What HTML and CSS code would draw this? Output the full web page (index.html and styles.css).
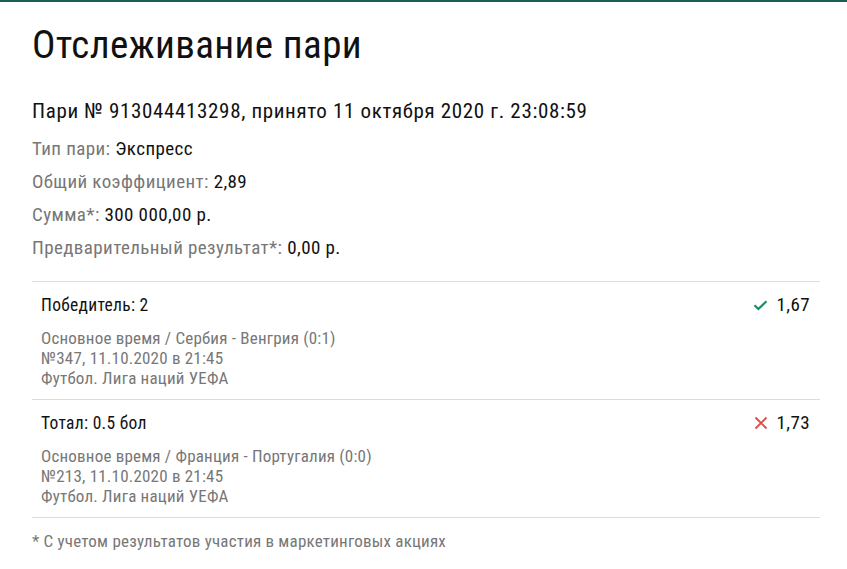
FILE: index.html
```html
<!DOCTYPE html>
<html lang="ru">
<head>
  <meta charset="UTF-8">
  <title>Отслеживание пари</title>
  <meta name="viewport" content="width=device-width, initial-scale=1.0">
  <link rel="stylesheet" href="styles.css">
</head>
<body>
  <div class="page">
    <h1 class="title">Отслеживание пари</h1>
    <h2 class="bet-head">Пари № 913044413298, принято 11 октября 2020 г. 23:08:59</h2>

    <ul class="summary">
      <li><span class="label">Тип пари:</span> Экспресс</li>
      <li><span class="label">Общий коэффициент:</span> 2,89</li>
      <li><span class="label">Сумма*:</span> 300 000,00 р.</li>
      <li><span class="label">Предварительный результат*:</span> 0,00 р.</li>
    </ul>

    <div class="events">
      <div class="event">
        <div class="event-top">
          <div class="event-name">Победитель: 2</div>
          <div class="event-odd">
            <svg class="mark win" width="15" height="14" viewBox="0 0 15 14"><path d="M1.5 7.3 L5.4 11 L13.5 3.2" fill="none" stroke="currentColor" stroke-width="2.2"/></svg>
            1,67
          </div>
        </div>
        <div class="event-info">
          <div>Основное время / Сербия - Венгрия (0:1)</div>
          <div>№347, 11.10.2020 в 21:45</div>
          <div>Футбол. Лига наций УЕФА</div>
        </div>
      </div>

      <div class="event">
        <div class="event-top">
          <div class="event-name">Тотал: 0.5 бол</div>
          <div class="event-odd">
            <svg class="mark lose" width="14" height="14" viewBox="0 0 14 14"><path d="M1.5 1.5 L12.5 12.5 M12.5 1.5 L1.5 12.5" fill="none" stroke="currentColor" stroke-width="1.9"/></svg>
            1,73
          </div>
        </div>
        <div class="event-info">
          <div>Основное время / Франция - Португалия (0:0)</div>
          <div>№213, 11.10.2020 в 21:45</div>
          <div>Футбол. Лига наций УЕФА</div>
        </div>
      </div>
    </div>

    <p class="note">* С учетом результатов участия в маркетинговых акциях</p>
  </div>
</body>
</html>
```

FILE: styles.css
```css
* {
  box-sizing: border-box;
  margin: 0;
  padding: 0;
}

body {
  background-color: #fff;
  border-top: 2px solid #1e5b53;
  font-family: "Roboto", "Liberation Sans", sans-serif;
  font-stretch: condensed;
  color: #111;
}

.page {
  padding: 19px 27px 0 32px;
}

.title {
  font-size: 39px;
  font-weight: 400;
  line-height: 48px;
  letter-spacing: 0.4px;
}

.bet-head {
  margin-top: 29px;
  font-size: 21px;
  font-weight: 400;
  line-height: 26px;
  letter-spacing: 0.65px;
}

.summary {
  list-style: none;
  margin-top: 8px;
  font-size: 19px;
  letter-spacing: 0.4px;
}

.summary li {
  line-height: 33px;
}

.label {
  color: #777;
}

.events {
  margin-top: 17px;
  border-top: 1px solid #dcdcdc;
}

.event {
  padding: 12px 10px 11px 9px;
  border-bottom: 1px solid #dcdcdc;
}

.event-top {
  display: flex;
  justify-content: space-between;
  align-items: center;
  font-size: 17.5px;
  line-height: 22px;
  letter-spacing: 0.3px;
}

.event-odd {
  display: flex;
  align-items: center;
  gap: 9px;
  font-size: 19px;
  letter-spacing: 0.4px;
}

.mark.win {
  color: #1c8c6c;
}

.mark.lose {
  color: #e04a4a;
}

.event-info {
  margin-top: 12px;
  color: #777;
  font-size: 17px;
  line-height: 20px;
  letter-spacing: 0.2px;
}

.note {
  margin-top: 13px;
  color: #777;
  font-size: 17px;
  letter-spacing: 0.2px;
}
```
